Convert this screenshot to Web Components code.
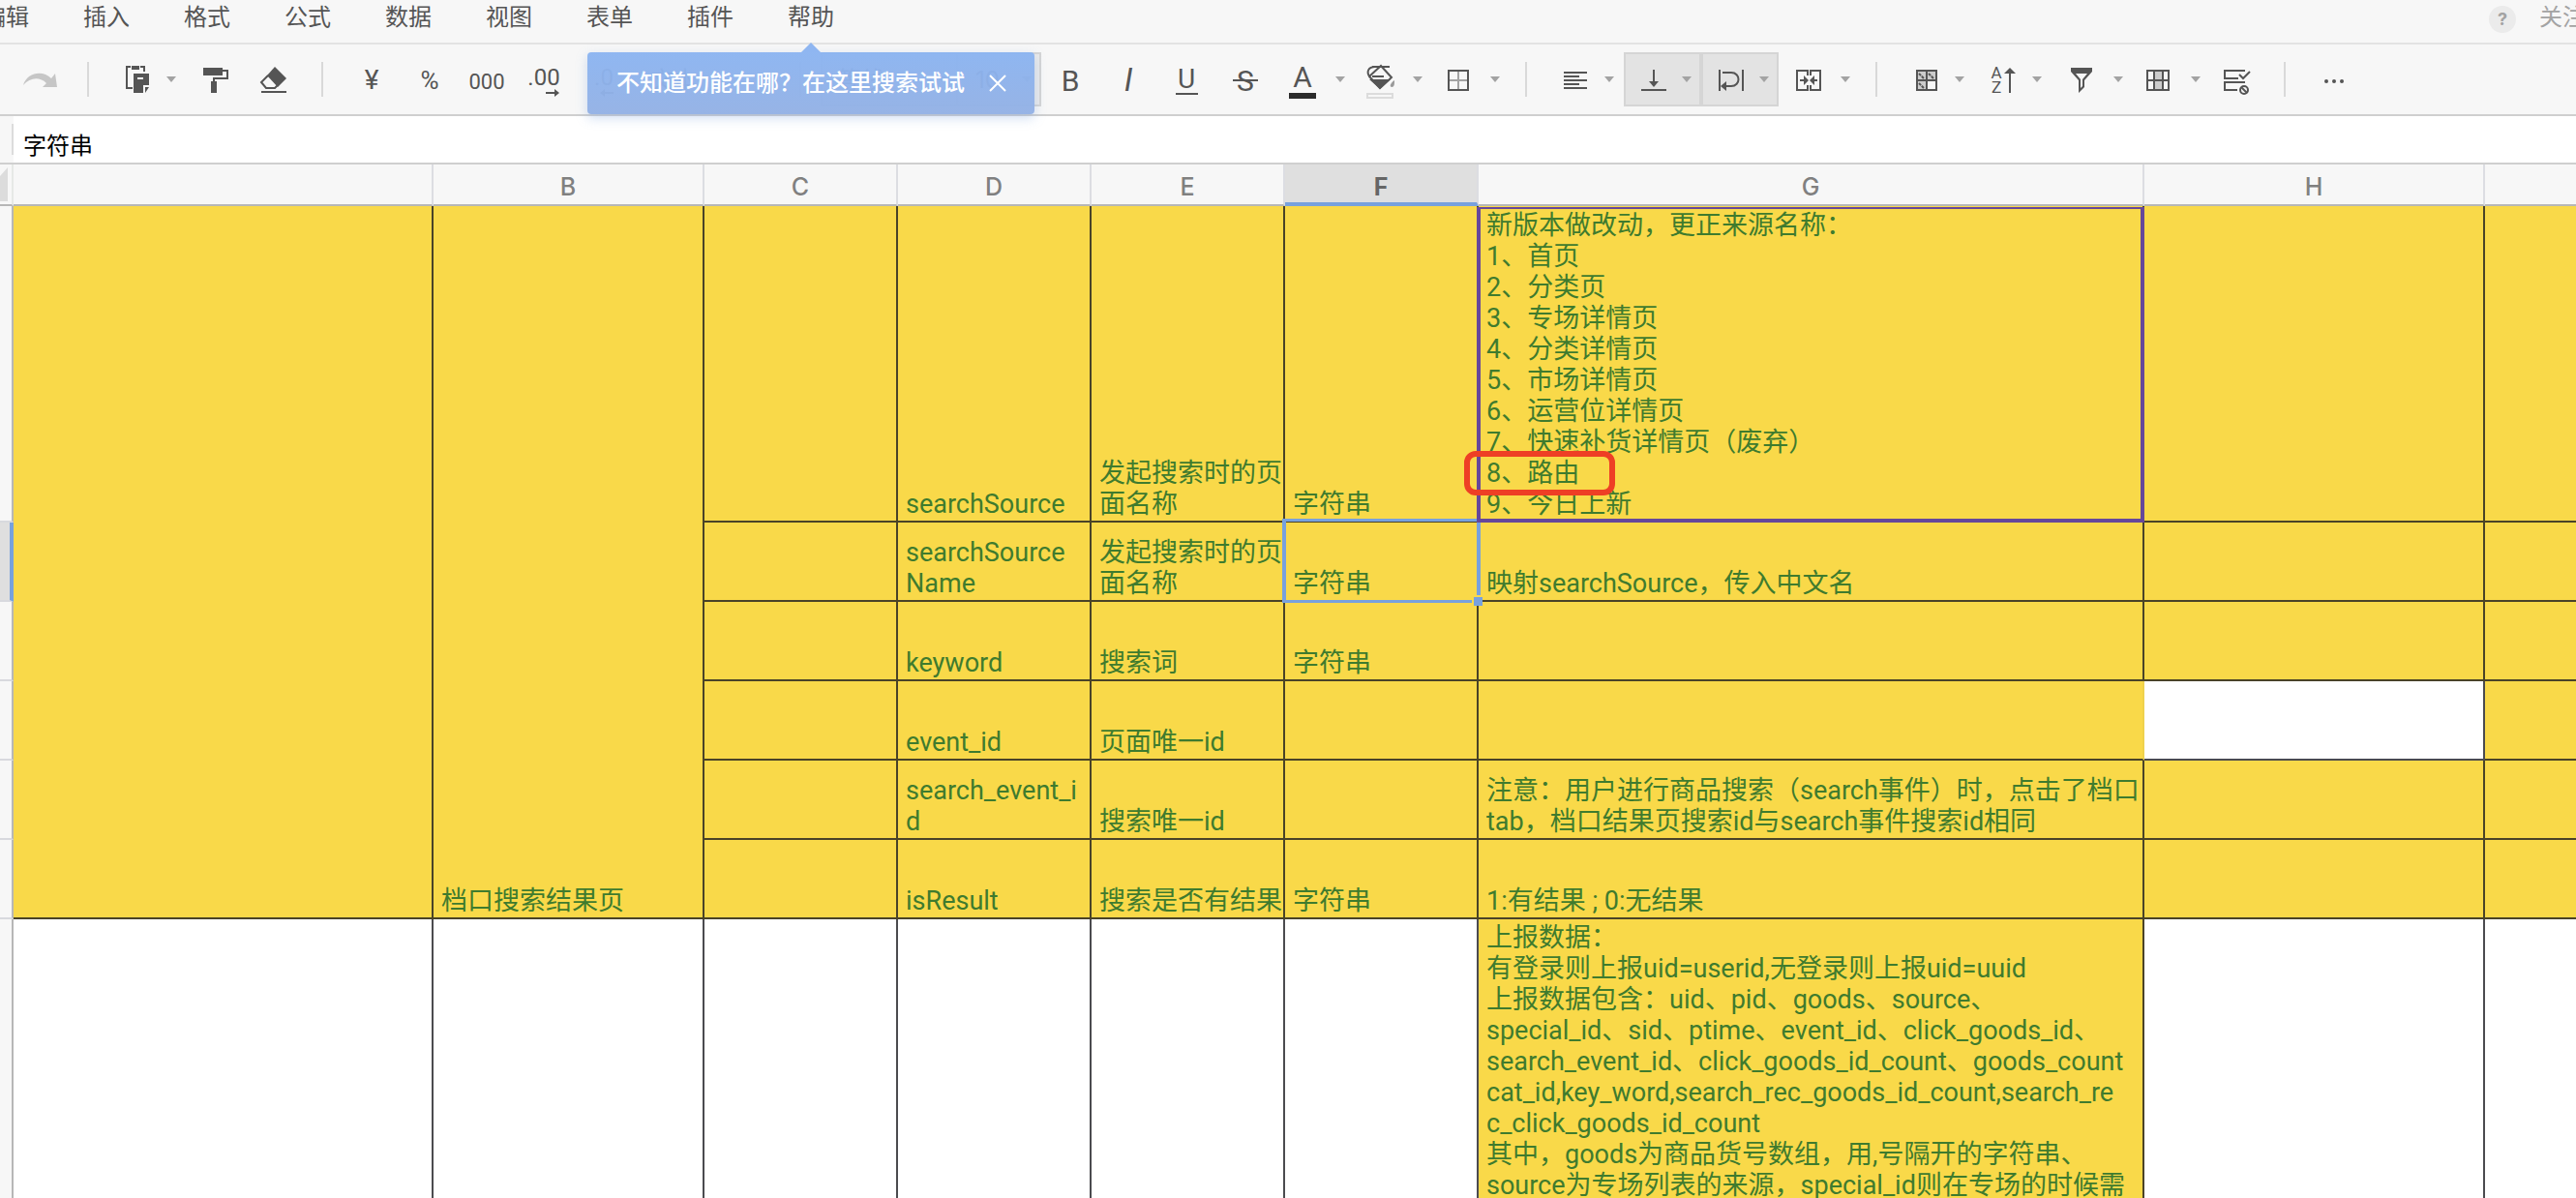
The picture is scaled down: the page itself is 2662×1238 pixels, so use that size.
<!DOCTYPE html>
<html lang="zh-CN">
<head>
<meta charset="utf-8">
<title>表格</title>
<style>
  html, body {
    margin: 0;
    height: 100%;
    overflow: hidden;
  }

  body {
    font-family: Inter, "Noto Sans CJK SC", sans-serif;
    background: #fff;
    color: #555;
    --line: #cfcfcf;
    --bar: #f7f7f7;
    --blue: #78a1dd;
  }
</style>
</head>
<body>
<sheet-app></sheet-app>

<script>
const icons = {
  redo: '<path fill="#c6c6c6" d="M14 34C18 21 34 18 43 27L47 22L49 36H34L38 32C31 25 21 26 14 34z"/>',
  paste: '<path class="s" d="M23 15H19V37H25M33 15H37V20"/><path d="M24 14h8v4h-8zM26 22H42V34H36V42H26zM38 42V36H42z"/><path fill="#f7f7f7" d="M30 26h6v2h-6z"/>',
  brush: '<path d="M18 16h20v8H18zM26 30h6v12h-6z"/><path class="s" d="M38 19H43V27H29V31"/>',
  eraser: '<path d="M32 15L44 27L35 36L24 24z"/><path class="s" d="M25 24L18 31L23 37H32L36 33"/><path class="s" d="M18 41H44"/>',
  yuan: '<text x="30" y="38" font-size="28">¥</text>',
  percent: '<text x="30" y="38" font-size="26">%</text>',
  thousand: '<text x="29" y="38" font-size="22">000</text>',
  decimalAdd: '<text x="28" y="34" font-size="24">.00</text><path class="s" d="M30 42H41"/><path d="M39 38L44 42L39 46z"/>',
  decimalDrop: '<text x="30" y="34" font-size="24">.0</text><path class="s" d="M29 42H40"/><path d="M31 38L26 42L31 46z"/>',
  bold: '<text x="30" y="40" font-size="30">B</text>',
  italic: '<text x="30" y="40" font-size="33" font-family="Liberation Mono" font-style="italic">I</text>',
  underline: '<text x="30" y="37" font-size="28">U</text><path d="M19 42h23v2H19z"/>',
  strike: '<text x="31" y="40" font-size="30">S</text><path d="M18 28h26v2H18z"/>',
  color: '<text x="30" y="36" font-size="30">A</text><path fill="#2b2b2b" d="M16 42h28v6H16z"/>',
  fill: '<path class="s" d="M22 15H40M25 15C18 15 16 20 19 25L31 14L42 26L30 37L19 25M22 25H34"/><path d="M19 28H41L30 38z"/><path fill="#999" d="M45 29C45 33 45 36 42 36C39 35 42 31 45 29z"/><path fill="none" stroke="#dcdcdc" stroke-width="2" d="M17 43h26v4H17z"/>',
  borders: '<path fill="none" stroke="#a3a3a3" stroke-width="2" d="M31 19V39M21 29H41"/><path class="s" d="M21 19h20v20H21z"/>',
  align: '<path class="s" d="M18 21H42M18 25H34M18 29H42M18 33H34M18 37H42"/>',
  valign: '<path class="s" d="M31 18V32M18 39H44"/><path d="M26 30H36L31 36z"/>',
  wrap: '<path class="s" d="M19 18V40M43 18V40M22 21H31C41 21 41 35 31 35H25"/><path d="M20 35L26 30V40z"/>',
  merge: '<path class="s" d="M30 24V19H19V39H30V34M33 24V19H43V39H33V34M22 29H27M35 29H40"/><path d="M26 24L31 29L26 34zM37 24L32 29L37 34z"/>',
  condition: '<path fill="#ccc" d="M21 19h20v10H31v10H21z"/><path class="s" d="M21 19h20v20H21zM31 19V39M21 29H41"/><path class="s" stroke-dasharray="3 1" d="M23 22L28 27M33 22L38 27M23 32L28 37"/>',
  sort: '<text x="23" y="27" font-size="17">A</text><text x="23" y="42" font-size="17">Z</text><path class="s" d="M37 20V42"/><path d="M31 22H43L37 16z"/>',
  filter: '<path d="M20 16h22v4H20z"/><path d="M20 20L28 29V42L34 36V29L42 20z"/><path fill="#f7f7f7" d="M25 22H37L32 28V35L30 37V28z"/>',
  freeze: '<path fill="#ccc" d="M26 19h9v20h-9z"/><path class="s" d="M19 19h22v20H19zM26 19V39M35 19V39M19 29H41"/>',
  validate: '<path class="s" d="M40 19H19V27H33M40 31H19V39H32M34 23L38 27L45 20"/><circle class="s" cx="39" cy="39" r="4"/><path class="s" d="M36 36L42 42"/>',
  more: '<circle cx="22" cy="30" r="2"/><circle cx="30" cy="30" r="2"/><circle cx="38" cy="30" r="2"/>'
};

class ToolButton extends HTMLElement {
  constructor() {
    super();
    this.attachShadow({ mode: 'open' });
  }

  connectedCallback() {
    const caret = this.hasAttribute('caret') ? '<i></i>' : '';
    this.shadowRoot.innerHTML = `
      <style>
        :host { display: block; flex: none; }
        button {
          box-sizing: border-box;
          display: flex;
          align-items: center;
          width: 60px;
          height: 56px;
          padding: 0;
          border: 0;
          background: none;
          color: inherit;
        }
        :host([caret]) button { width: 80px; }
        :host([active]) button {
          background: #e3e3e3;
          box-shadow: inset 0 0 0 2px #d5d5d5;
        }
        svg { flex: none; display: block; fill: #555; }
        .s { fill: none; stroke: #555; stroke-width: 2; }
        text { font-family: Roboto, sans-serif; text-anchor: middle; }
        i {
          border: 5px solid transparent;
          border-top: 6px solid #a3a3a3;
          border-bottom: 0;
        }
        :host([caret="wide"]) i { margin-left: 4px; }
      </style>
      <button type="button" aria-label="${this.getAttribute('icon')}">
        <svg width="60" height="56" viewBox="0 0 60 56">${icons[this.getAttribute('icon')]}</svg>${caret}
      </button>`;
  }
}

class ToolSeparator extends HTMLElement {
  constructor() {
    super();
    this.attachShadow({ mode: 'open' }).innerHTML = `
      <style>
        :host {
          display: block;
          flex: none;
          width: 2px;
          height: 36px;
          margin: 0 20px;
          background: #d9d9d9;
        }
      </style>`;
  }
}

class ToolSelect extends HTMLElement {
  constructor() {
    super();
    this.attachShadow({ mode: 'open' });
  }

  connectedCallback() {
    this.shadowRoot.innerHTML = `
      <style>
        :host { display: flex; flex: none; align-items: center; height: 56px; box-sizing: border-box; }
        select {
          appearance: none;
          flex: 1;
          min-width: 0;
          border: 0;
          padding: 0 0 0 18px;
          background: none;
          color: #555;
          font: 24px Inter, "Noto Sans CJK SC", sans-serif;
        }
        i {
          margin-right: 10px;
          border: 5px solid transparent;
          border-top: 6px solid #a3a3a3;
          border-bottom: 0;
        }
      </style>
      <select aria-label="${this.getAttribute('label')}"><option>${this.getAttribute('value')}</option></select><i></i>`;
  }
}

class HintBubble extends HTMLElement {
  constructor() {
    super();
    this.attachShadow({ mode: 'open' }).innerHTML = `
      <style>
        :host {
          box-sizing: border-box;
          display: flex;
          align-items: center;
          gap: 24px;
          height: 64px;
          padding: 0 28px 0 30px;
          border-radius: 4px;
          background: linear-gradient(rgba(139, 180, 241, .96), rgba(147, 177, 229, .96));
          box-shadow: 0 4px 12px rgba(120, 161, 221, .35);
          color: #fff;
          font-size: 24px;
          font-weight: 500;
          line-height: 32px;
          white-space: nowrap;
        }
        :host::before {
          content: "";
          position: absolute;
          left: 50%;
          top: -10px;
          margin-left: -10px;
          border: 10px solid transparent;
          border-top: 0;
          border-bottom-color: #8fb6f1;
        }
        button { display: flex; padding: 0; border: 0; background: none; }
      </style>
      <slot></slot>
      <button type="button" aria-label="关闭">
        <svg width="20" height="20" viewBox="0 0 20 20"><path d="M2 2L18 18M18 2L2 18" stroke="#fff" stroke-width="2"/></svg>
      </button>`;
  }
}

class SheetMenubar extends HTMLElement {
  constructor() {
    super();
    this.attachShadow({ mode: 'open' });
    const items = ['编辑', '插入', '格式', '公式', '数据', '视图', '表单', '插件']
      .map(name => `<button type="button">${name}</button>`).join('');
    this.shadowRoot.innerHTML = `
      <style>
        :host {
          display: flex;
          align-items: flex-start;
          height: 44px;
          border-bottom: 2px solid #e3e3e3;
          background: var(--bar);
        }
        nav { display: flex; margin-left: -46px; }
        .help { position: relative; }
        button {
          padding: 0 28px;
          border: 0;
          background: none;
          color: #555;
          font: 24px/36px Inter, "Noto Sans CJK SC", sans-serif;
          white-space: nowrap;
        }
        hint-bubble {
          position: absolute;
          z-index: 5;
          left: 50%;
          top: 54px;
          transform: translateX(-50%);
        }
        .side { display: flex; gap: 24px; margin: 0 -10px 0 auto; }
        .side button { padding: 0; color: #a3a3a3; }
        .side .q {
          width: 28px;
          height: 28px;
          margin-top: 6px;
          border-radius: 50%;
          background: #ebebeb;
          font-size: 18px;
          font-weight: 700;
          line-height: 28px;
        }
      </style>
      <nav>${items}
        <div class="help">
          <button type="button">帮助</button>
          <hint-bubble>不知道功能在哪？在这里搜索试试</hint-bubble>
        </div>
      </nav>
      <div class="side"><button type="button" class="q">?</button><button type="button">关注</button></div>`;
  }
}

class SheetToolbar extends HTMLElement {
  constructor() {
    super();
    this.attachShadow({ mode: 'open' }).innerHTML = `
      <style>
        :host {
          display: flex;
          align-items: center;
          height: 72px;
          padding-left: 10px;
          border-bottom: 2px solid var(--line);
          background: var(--bar);
        }
        .format { width: 152px; }
        .font { display: flex; background: #eaeaea; box-shadow: inset 0 0 0 2px #d5d5d5; }
        .family { width: 142px; border-right: 2px solid #d5d5d5; }
        .size { width: 86px; }
      </style>
      <tool-button icon="redo"></tool-button>
      <tool-separator></tool-separator>
      <tool-button icon="paste" caret></tool-button>
      <tool-button icon="brush"></tool-button>
      <tool-button icon="eraser"></tool-button>
      <tool-separator></tool-separator>
      <tool-button icon="yuan"></tool-button>
      <tool-button icon="percent"></tool-button>
      <tool-button icon="thousand"></tool-button>
      <tool-button icon="decimalAdd"></tool-button>
      <tool-button icon="decimalDrop"></tool-button>
      <tool-select class="format" label="数字格式" value="文本"></tool-select>
      <tool-separator></tool-separator>
      <div class="font">
        <tool-select class="family" label="字体" value="等线"></tool-select>
        <tool-select class="size" label="字号" value="10"></tool-select>
      </div>
      <tool-button icon="bold"></tool-button>
      <tool-button icon="italic"></tool-button>
      <tool-button icon="underline"></tool-button>
      <tool-button icon="strike"></tool-button>
      <tool-button icon="color" caret="wide"></tool-button>
      <tool-button icon="fill" caret="wide"></tool-button>
      <tool-button icon="borders" caret="wide"></tool-button>
      <tool-separator></tool-separator>
      <tool-button icon="align" caret></tool-button>
      <tool-button icon="valign" caret active></tool-button>
      <tool-button icon="wrap" caret active></tool-button>
      <tool-button icon="merge" caret="wide"></tool-button>
      <tool-separator></tool-separator>
      <tool-button icon="condition" caret></tool-button>
      <tool-button icon="sort" caret></tool-button>
      <tool-button icon="filter" caret="wide"></tool-button>
      <tool-button icon="freeze" caret="wide"></tool-button>
      <tool-button icon="validate"></tool-button>
      <tool-separator></tool-separator>
      <tool-button icon="more"></tool-button>`;
  }
}

class FormulaBar extends HTMLElement {
  constructor() {
    super();
    this.attachShadow({ mode: 'open' }).innerHTML = `
      <style>
        :host {
          display: flex;
          align-items: center;
          height: 48px;
          border-bottom: 2px solid var(--line);
          background: linear-gradient(90deg, var(--bar) 14px, #fff 14px);
        }
        span { width: 2px; height: 32px; margin-left: 12px; background: #dcdcdc; }
        input {
          box-sizing: border-box;
          flex: 1;
          height: 48px;
          padding: 8px 10px 0;
          border: 0;
          outline: 0;
          background: none;
          color: #000;
          font: 24px Inter, "Noto Sans CJK SC", sans-serif;
        }
      </style>
      <span></span><input aria-label="编辑栏" value="字符串">`;
  }
}

class SheetGrid extends HTMLElement {
  constructor() {
    super();
    this.attachShadow({ mode: 'open' }).innerHTML = `
      <style>
        :host { display: block; flex: 1; min-height: 0; overflow: hidden; }
        table {
          width: 100%;
          table-layout: fixed;
          border-spacing: 0;
          color: #3f7b2e;
          font-family: Roboto, "Noto Sans CJK SC", sans-serif;
          font-size: 27px;
          line-height: 32px;
        }
        th, td { box-sizing: border-box; padding: 0; }
        thead th {
          height: 43px;
          padding-top: 4px;
          border-right: 2px solid #dcdde2;
          border-bottom: 2px solid #b7b7b7;
          background: var(--bar);
          color: #808080;
          font-family: Inter, sans-serif;
          font-size: 25px;
          font-weight: 500;
        }
        thead th.on {
          padding-top: 6px;
          border-bottom: 4px solid var(--blue);
          background: #dfdfdf;
          color: #666;
          font-weight: 700;
        }
        thead th:last-child { border-right: 0; }
        thead th.corner { padding: 0; border-right-color: #e6e9e6; }
        .corner svg { display: block; }
        tbody th {
          border-right: 2px solid #b7b7b7;
          border-bottom: 2px solid #d8d9de;
          background: var(--bar);
        }
        tbody th.on { border-right: 4px solid var(--blue); background: #dfdfdf; }
        td {
          position: relative;
          padding: 1px 0 1px 8px;
          border-right: 2px solid rgba(24, 24, 30, .78);
          border-bottom: 2px solid rgba(24, 24, 30, .78);
          background: #f9d949;
          vertical-align: bottom;
          white-space: pre;
        }
        td:last-child { border-right: 0; }
        td.open { border-right-color: #efd24c; }
        td.blank { background: #fff; }
        .row { height: 82px; }
        .first { height: 327px; }
        .last { height: 400px; }
        .last td { padding-top: 3px; vertical-align: top; }
        /* cell ranges drawn over the grid lines */
        .select {
          position: absolute;
          z-index: 1;
          inset: -4px -4px -3px -3px;
          border: 4px solid var(--blue);
          border-width: 3px 4px 3px 4px;
        }
        .select::after {
          content: "";
          position: absolute;
          right: -6px;
          bottom: -6px;
          width: 9px;
          height: 9px;
          border: solid #f9d949;
          border-width: 2px 0 0 2px;
          background: var(--blue);
        }
        .peer {
          position: absolute;
          z-index: 2;
          inset: 1px -2px -2px -2px;
          border: 4px solid #66479a;
          border-top-width: 2px;
        }
        .mark {
          position: absolute;
          z-index: 3;
          left: -15px;
          top: 253px;
          box-sizing: border-box;
          width: 156px;
          height: 46px;
          border: 6px solid #ee3f25;
          border-radius: 12px;
        }
      </style>
      <table>
        <colgroup>
          <col style="width:14px"><col style="width:434px"><col style="width:280px">
          <col style="width:200px"><col style="width:200px"><col style="width:200px"><col style="width:200px">
          <col style="width:688px"><col style="width:352px"><col>
        </colgroup>
        <thead>
          <tr>
            <th class="corner"><svg width="12" height="41"><path fill="#dcdcdc" d="M8 3V38H0V12z"/></svg></th>
            <th></th><th>B</th><th>C</th><th>D</th><th>E</th><th class="on">F</th><th>G</th><th>H</th><th></th>
          </tr>
        </thead>
        <tbody>
          <tr class="first">
            <th></th><td rowspan="6"></td><td rowspan="6">档口搜索结果页</td><td></td>
            <td>searchSource</td><td>发起搜索时的页<br>面名称</td><td>字符串</td>
            <td>新版本做改动，更正来源名称：<br>1、首页<br>2、分类页<br>3、专场详情页<br>4、分类详情页<br>5、市场详情页<br>6、运营位详情页<br>7、快速补货详情页（废弃）<br>8、路由<br>9、今日上新<span class="peer"></span><span class="mark"></span></td>
            <td></td><td></td>
          </tr>
          <tr class="row">
            <th class="on"></th><td></td>
            <td>searchSource<br>Name</td><td>发起搜索时的页<br>面名称</td><td>字符串<span class="select"></span></td>
            <td>映射searchSource，传入中文名</td><td></td><td></td>
          </tr>
          <tr class="row">
            <th></th><td></td><td>keyword</td><td>搜索词</td><td>字符串</td><td></td><td></td><td></td>
          </tr>
          <tr class="row">
            <th></th><td></td><td>event_id</td><td>页面唯一id</td><td></td><td class="open"></td><td class="blank"></td><td></td>
          </tr>
          <tr class="row">
            <th></th><td></td><td>search_event_i<br>d</td><td>搜索唯一id</td><td></td>
            <td>注意：用户进行商品搜索（search事件）时，点击了档口<br>tab，档口结果页搜索id与search事件搜索id相同</td><td></td><td></td>
          </tr>
          <tr class="row">
            <th></th><td></td><td>isResult</td><td>搜索是否有结果</td><td>字符串</td><td>1:有结果 ; 0:无结果</td><td></td><td></td>
          </tr>
          <tr class="last">
            <th></th><td class="blank"></td><td class="blank"></td><td class="blank"></td><td class="blank"></td><td class="blank"></td><td class="blank"></td>
            <td>上报数据：<br>有登录则上报uid=userid,无登录则上报uid=uuid<br>上报数据包含：uid、pid、goods、source、<br>special_id、sid、ptime、event_id、click_goods_id、<br>search_event_id、click_goods_id_count、goods_count<br>cat_id,key_word,search_rec_goods_id_count,search_re<br>c_click_goods_id_count<br>其中，goods为商品货号数组，用,号隔开的字符串、<br>source为专场列表的来源，special_id则在专场的时候需</td>
            <td class="blank"></td><td class="blank"></td>
          </tr>
        </tbody>
      </table>`;
  }
}

class SheetApp extends HTMLElement {
  constructor() {
    super();
    this.attachShadow({ mode: 'open' }).innerHTML = `
      <style>
        :host { display: flex; flex-direction: column; height: 100vh; overflow: hidden; }
        sheet-menubar, sheet-toolbar, formula-bar { flex: none; }
      </style>
      <sheet-menubar></sheet-menubar>
      <sheet-toolbar></sheet-toolbar>
      <formula-bar></formula-bar>
      <sheet-grid></sheet-grid>`;
  }
}

customElements.define('tool-button', ToolButton);
customElements.define('tool-separator', ToolSeparator);
customElements.define('tool-select', ToolSelect);
customElements.define('hint-bubble', HintBubble);
customElements.define('sheet-menubar', SheetMenubar);
customElements.define('sheet-toolbar', SheetToolbar);
customElements.define('formula-bar', FormulaBar);
customElements.define('sheet-grid', SheetGrid);
customElements.define('sheet-app', SheetApp);
</script>
</body>
</html>
